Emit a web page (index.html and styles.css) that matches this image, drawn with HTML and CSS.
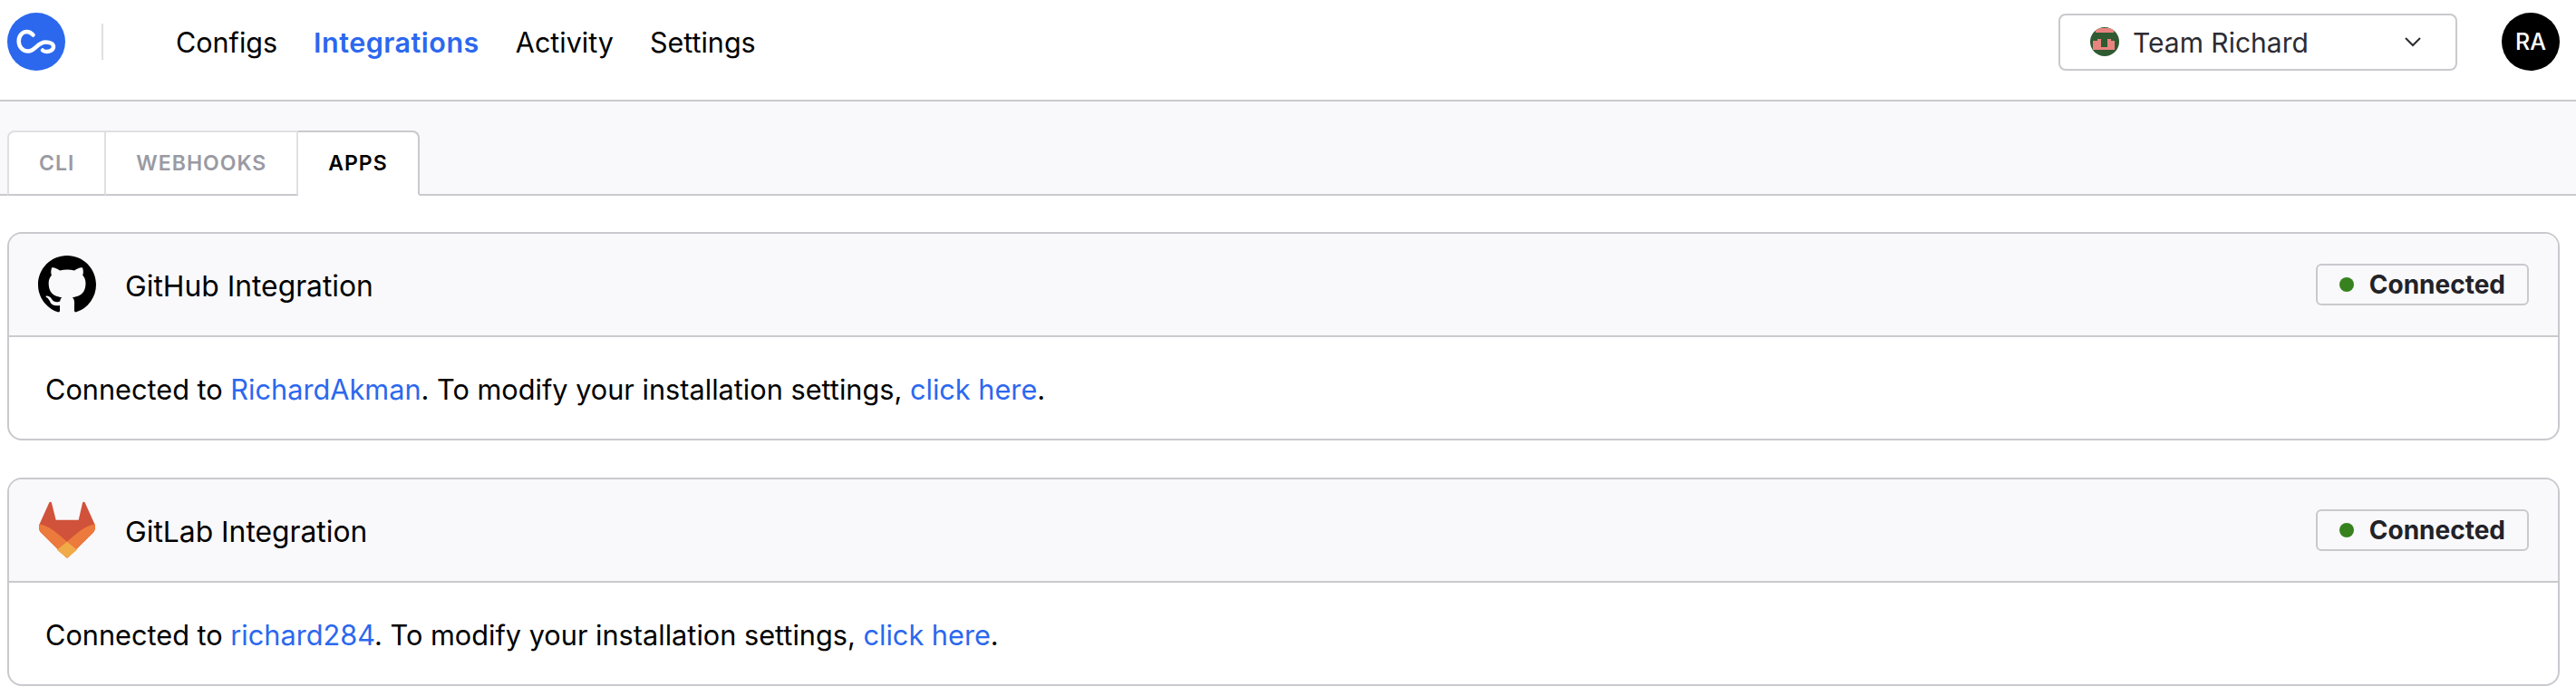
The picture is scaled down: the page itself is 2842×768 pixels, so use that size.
FILE: index.html

```html
<!DOCTYPE html>
<html lang="en">
<head>
  <meta charset="UTF-8" />
  <title>Integrations</title>
  <link rel="stylesheet" href="styles.css">
</head>
<body>

  <header class="nav">
    <svg class="logo" viewBox="0 0 64 64">
      <circle cx="32" cy="32" r="32" fill="#2b68ee"/>
      <path d="M28.500 24.500C26.500 22.300 24.500 21 21.500 21C16.500 21 12.700 25.500 12.700 31.500C12.700 37.500 17 42.500 23 42.500C31 42.500 33 32.500 42.500 32.500C47.500 32.500 51 34.500 51 37.500C51 41 47 43 43.500 43C41.500 43 40 42.500 39 41.500" fill="none" stroke="#fff" stroke-width="4.500" stroke-linecap="round"/>
    </svg>
    <div class="divider"></div>
    <nav class="links">
      <a href="#">Configs</a>
      <a href="#" class="active">Integrations</a>
      <a href="#">Activity</a>
      <a href="#">Settings</a>
    </nav>
    <div class="team">
      <svg class="team-icon" viewBox="0 0 32 32">
        <rect width="32" height="32" fill="#2f5a32"/>
        <rect x="6" y="1" width="20" height="5" fill="#e8837f"/>
        <path d="M8 13H12V22H19V13H23V15H27V25H3V15H8Z" fill="#e8837f"/>
      </svg>
      <span class="team-name">Team Richard</span>
      <svg class="chevron" viewBox="0 0 20 12">
        <path d="M2 2L10 10L18 2" fill="none" stroke="#2c2c32" stroke-width="2"/>
      </svg>
    </div>
    <div class="avatar">RA</div>
  </header>

  <div class="tabs">
    <a href="#" class="tab">CLI</a>
    <a href="#" class="tab">WEBHOOKS</a>
    <a href="#" class="tab current">APPS</a>
  </div>

  <main class="content">
    <section class="card">
      <div class="card-head">
        <svg class="card-icon" viewBox="0 0 16 16">
          <path d="M8 0C3.580 0 0 3.580 0 8c0 3.540 2.290 6.530 5.470 7.590.4.070.55-.17.55-.38 0-.19-.01-.82-.01-1.490-2.010.37-2.530-.49-2.690-.94-.09-.23-.48-.94-.82-1.130-.28-.15-.68-.52-.01-.53.63-.01 1.080.58 1.230.82.72 1.210 1.870.87 2.330.66.07-.52.28-.87.51-1.070-1.780-.2-3.640-.89-3.640-3.950 0-.87.31-1.590.82-2.150-.08-.2-.36-1.020.08-2.120 0 0 .67-.21 2.200.82.64-.18 1.320-.27 2-.27.68 0 1.360.09 2 .27 1.530-1.040 2.200-.82 2.200-.82.44 1.100.16 1.920.08 2.120.51.56.82 1.270.82 2.150 0 3.070-1.870 3.750-3.650 3.950.29.25.54.73.54 1.480 0 1.070-.01 1.930-.01 2.200 0 .21.15.46.55.38A8.013 8.013 0 0016 8c0-4.420-3.580-8-8-8z" fill="#000"/>
        </svg>
        <h2>GitHub Integration</h2>
        <span class="badge"><i class="dot"></i>Connected</span>
      </div>
      <p class="card-body">Connected to <a href="#">RichardAkman</a>. To modify your installation settings, <a href="#">click here</a>.</p>
    </section>

    <section class="card">
      <div class="card-head">
        <svg class="card-icon" viewBox="0 0 64 64">
          <path d="M12.300 1.500C13 .5 14.500 .5 15 2L19.700 20.700H44.700L49 2C49.500 .5 51 .5 51.700 1.500L62.500 25.500C63.500 29 63 33 60 35.500L33.500 61.800C32.500 62.600 31.500 62.600 30.500 61.800L4 35.500C1 33 .5 29 1.500 25.500Z" fill="#d1523a"/>
          <path d="M1.300 25.300C12 27 22 36 32 44.700C42 36 52 27 62.700 25.300C63.500 29 63 33 60 35.500L33.500 61.800C32.500 62.600 31.500 62.600 30.500 61.800L4 35.500C1 33 .5 29 1.300 25.300Z" fill="#eb7a3c"/>
          <path d="M32 44.700L43 53.700L33.500 61.800C32.500 62.600 31.500 62.600 30.500 61.800L20.700 53.700Z" fill="#f0aa48"/>
        </svg>
        <h2>GitLab Integration</h2>
        <span class="badge"><i class="dot"></i>Connected</span>
      </div>
      <p class="card-body">Connected to <a href="#">richard284</a>. To modify your installation settings, <a href="#">click here</a>.</p>
    </section>
  </main>

</body>
</html>
```

FILE: styles.css

```css
body {
  font-family: Inter, 'Liberation Sans', sans-serif;
  margin: 0;
  background-color: #fff;
  color: #000;
}
a {
  text-decoration: none;
}

.nav {
  display: flex;
  align-items: center;
  height: 92px;
  padding: 0 18px 18px 8px;
  border-bottom: 2px solid #c9c9ce;
  background-color: #fff;
}
.logo {
  width: 64px;
  height: 64px;
}
.divider {
  width: 2px;
  height: 40px;
  margin-left: 40px;
  background-color: #e0e0e2;
}
.links {
  display: flex;
  gap: 40px;
  margin-left: 80px;
  font-size: 30.5px;
}
.links a {
  color: #000;
}
.links a.active {
  color: #2b68ee;
  font-weight: 600;
  letter-spacing: 0.5px;
}
.team {
  display: flex;
  align-items: center;
  box-sizing: border-box;
  width: 440px;
  height: 63px;
  margin-left: auto;
  padding: 0 33px;
  border: 2px solid #c9c9ce;
  border-radius: 8px;
}
.team-icon {
  width: 32px;
  height: 32px;
  border-radius: 50%;
}
.team-name {
  margin: 1px 0 0 15px;
  font-size: 30px;
  color: #2c2c32;
}
.chevron {
  width: 20px;
  height: 12px;
  margin-left: auto;
  margin-right: 4px;
}
.avatar {
  display: flex;
  align-items: center;
  justify-content: center;
  width: 64px;
  height: 64px;
  margin-left: 49px;
  border-radius: 50%;
  background-color: #000;
  color: #fff;
  font-size: 25px;
  font-weight: 500;
}

.tabs {
  display: flex;
  padding: 32px 0 0 8px;
  border-bottom: 2px solid #c9c9ce;
  background-color: #f9f9fb;
  height: 70px;
}
.tab {
  display: flex;
  align-items: center;
  padding: 0 33px;
  margin-bottom: -2px;
  border: 2px solid #e0e0e2;
  border-left-width: 0;
  border-bottom-color: #c9c9ce;
  background-color: #fff;
  color: #9a9aa3;
  font-size: 23px;
  font-weight: 600;
  letter-spacing: 1px;
}
.tab:first-child {
  border-left-width: 2px;
  border-top-left-radius: 8px;
}
.tab.current {
  border-color: #c9c9ce;
  border-bottom-color: #fff;
  border-top-right-radius: 8px;
  color: #000;
}

.content {
  display: flex;
  flex-direction: column;
  gap: 41px;
  padding: 40px 18px 0 8px;
}
.card {
  border: 2px solid #c9c9ce;
  border-radius: 16px;
  overflow: hidden;
}
.card-head {
  display: flex;
  align-items: center;
  height: 112px;
  padding: 0 32px;
  border-bottom: 2px solid #c9c9ce;
  background-color: #f9f9fb;
}
.card-icon {
  width: 64px;
  height: 64px;
}
.card-head h2 {
  margin: 2px 0 0 32px;
  font-size: 31.8px;
  font-weight: 400;
}
.badge {
  display: flex;
  align-items: center;
  box-sizing: border-box;
  height: 46px;
  margin-left: auto;
  padding: 0 24px;
  border: 2px solid #c9c9ce;
  border-radius: 6px;
  color: #222228;
  font-size: 28px;
  font-weight: 700;
}
.dot {
  width: 16px;
  height: 16px;
  margin-right: 17px;
  border-radius: 50%;
  background-color: #37821f;
}
.card-body {
  box-sizing: border-box;
  height: 112px;
  margin: 0;
  padding: 3px 40px 0;
  line-height: 110px;
  font-size: 30.7px;
}
.card-body a {
  color: #2b68ee;
}
```
